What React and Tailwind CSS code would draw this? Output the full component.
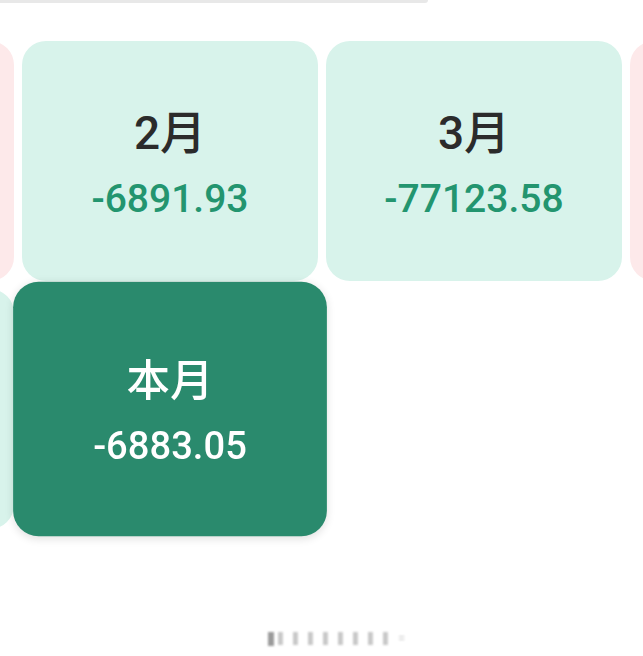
import React from "react";

const font = { fontFamily: "Roboto, 'Noto Sans CJK SC', sans-serif" };

function LightCard({ title, amount }) {
  return (
    <div className="w-[296px] h-[240px] shrink-0 rounded-3xl bg-[#d8f3eb] flex flex-col items-center justify-center pt-[4px]">
      <div className="text-[46px] leading-[54px] font-medium text-[#2b2b2b]">{title}</div>
      <div className="mt-[17px] text-[39px] leading-[44px] font-medium text-[#23956f]">{amount}</div>
    </div>
  );
}

function PinkCard() {
  return <div className="w-[296px] h-[240px] shrink-0 rounded-3xl bg-[#fde9ea]" />;
}

function BlankLight() {
  return <div className="w-[296px] h-[240px] shrink-0 rounded-3xl bg-[#d8f3eb]" />;
}

export default function App() {
  return (
    <div className="w-[643px] h-[656px] bg-white overflow-hidden flex flex-col" style={font}>
      <div className="h-[3px] w-[428px] bg-[#e8e8e8] rounded-br-full" />
      <div className="mt-[38px] ml-[-282px] flex flex-col gap-2">
        <div className="flex gap-2">
          <PinkCard />
          <LightCard title="2月" amount="-6891.93" />
          <LightCard title="3月" amount="-77123.58" />
          <PinkCard />
        </div>
        <div className="flex gap-2">
          <BlankLight />
          <div className="w-[296px] h-[240px] shrink-0 rounded-3xl bg-[#2a8a6d] scale-[1.06] shadow-[0_2px_8px_rgba(0,0,0,0.12)] flex flex-col items-center justify-center pt-[6px]">
            <div className="text-[41px] leading-[48px] font-medium text-white">本月</div>
            <div className="mt-[16px] text-[36px] leading-[42px] font-medium text-white">-6883.05</div>
          </div>
        </div>
      </div>
      <div className="mt-[100px] flex justify-center">
        <div className="ml-[32px] flex items-center gap-1 blur-[1.2px]">
          <div className="w-[6px] h-[14px] bg-[#9a9a9a]" />
          <div className="text-[13px] text-[#c8c8c8] tracking-[2px]">▍▍▍▍▍▍▍▍=</div>
        </div>
      </div>
    </div>
  );
}
